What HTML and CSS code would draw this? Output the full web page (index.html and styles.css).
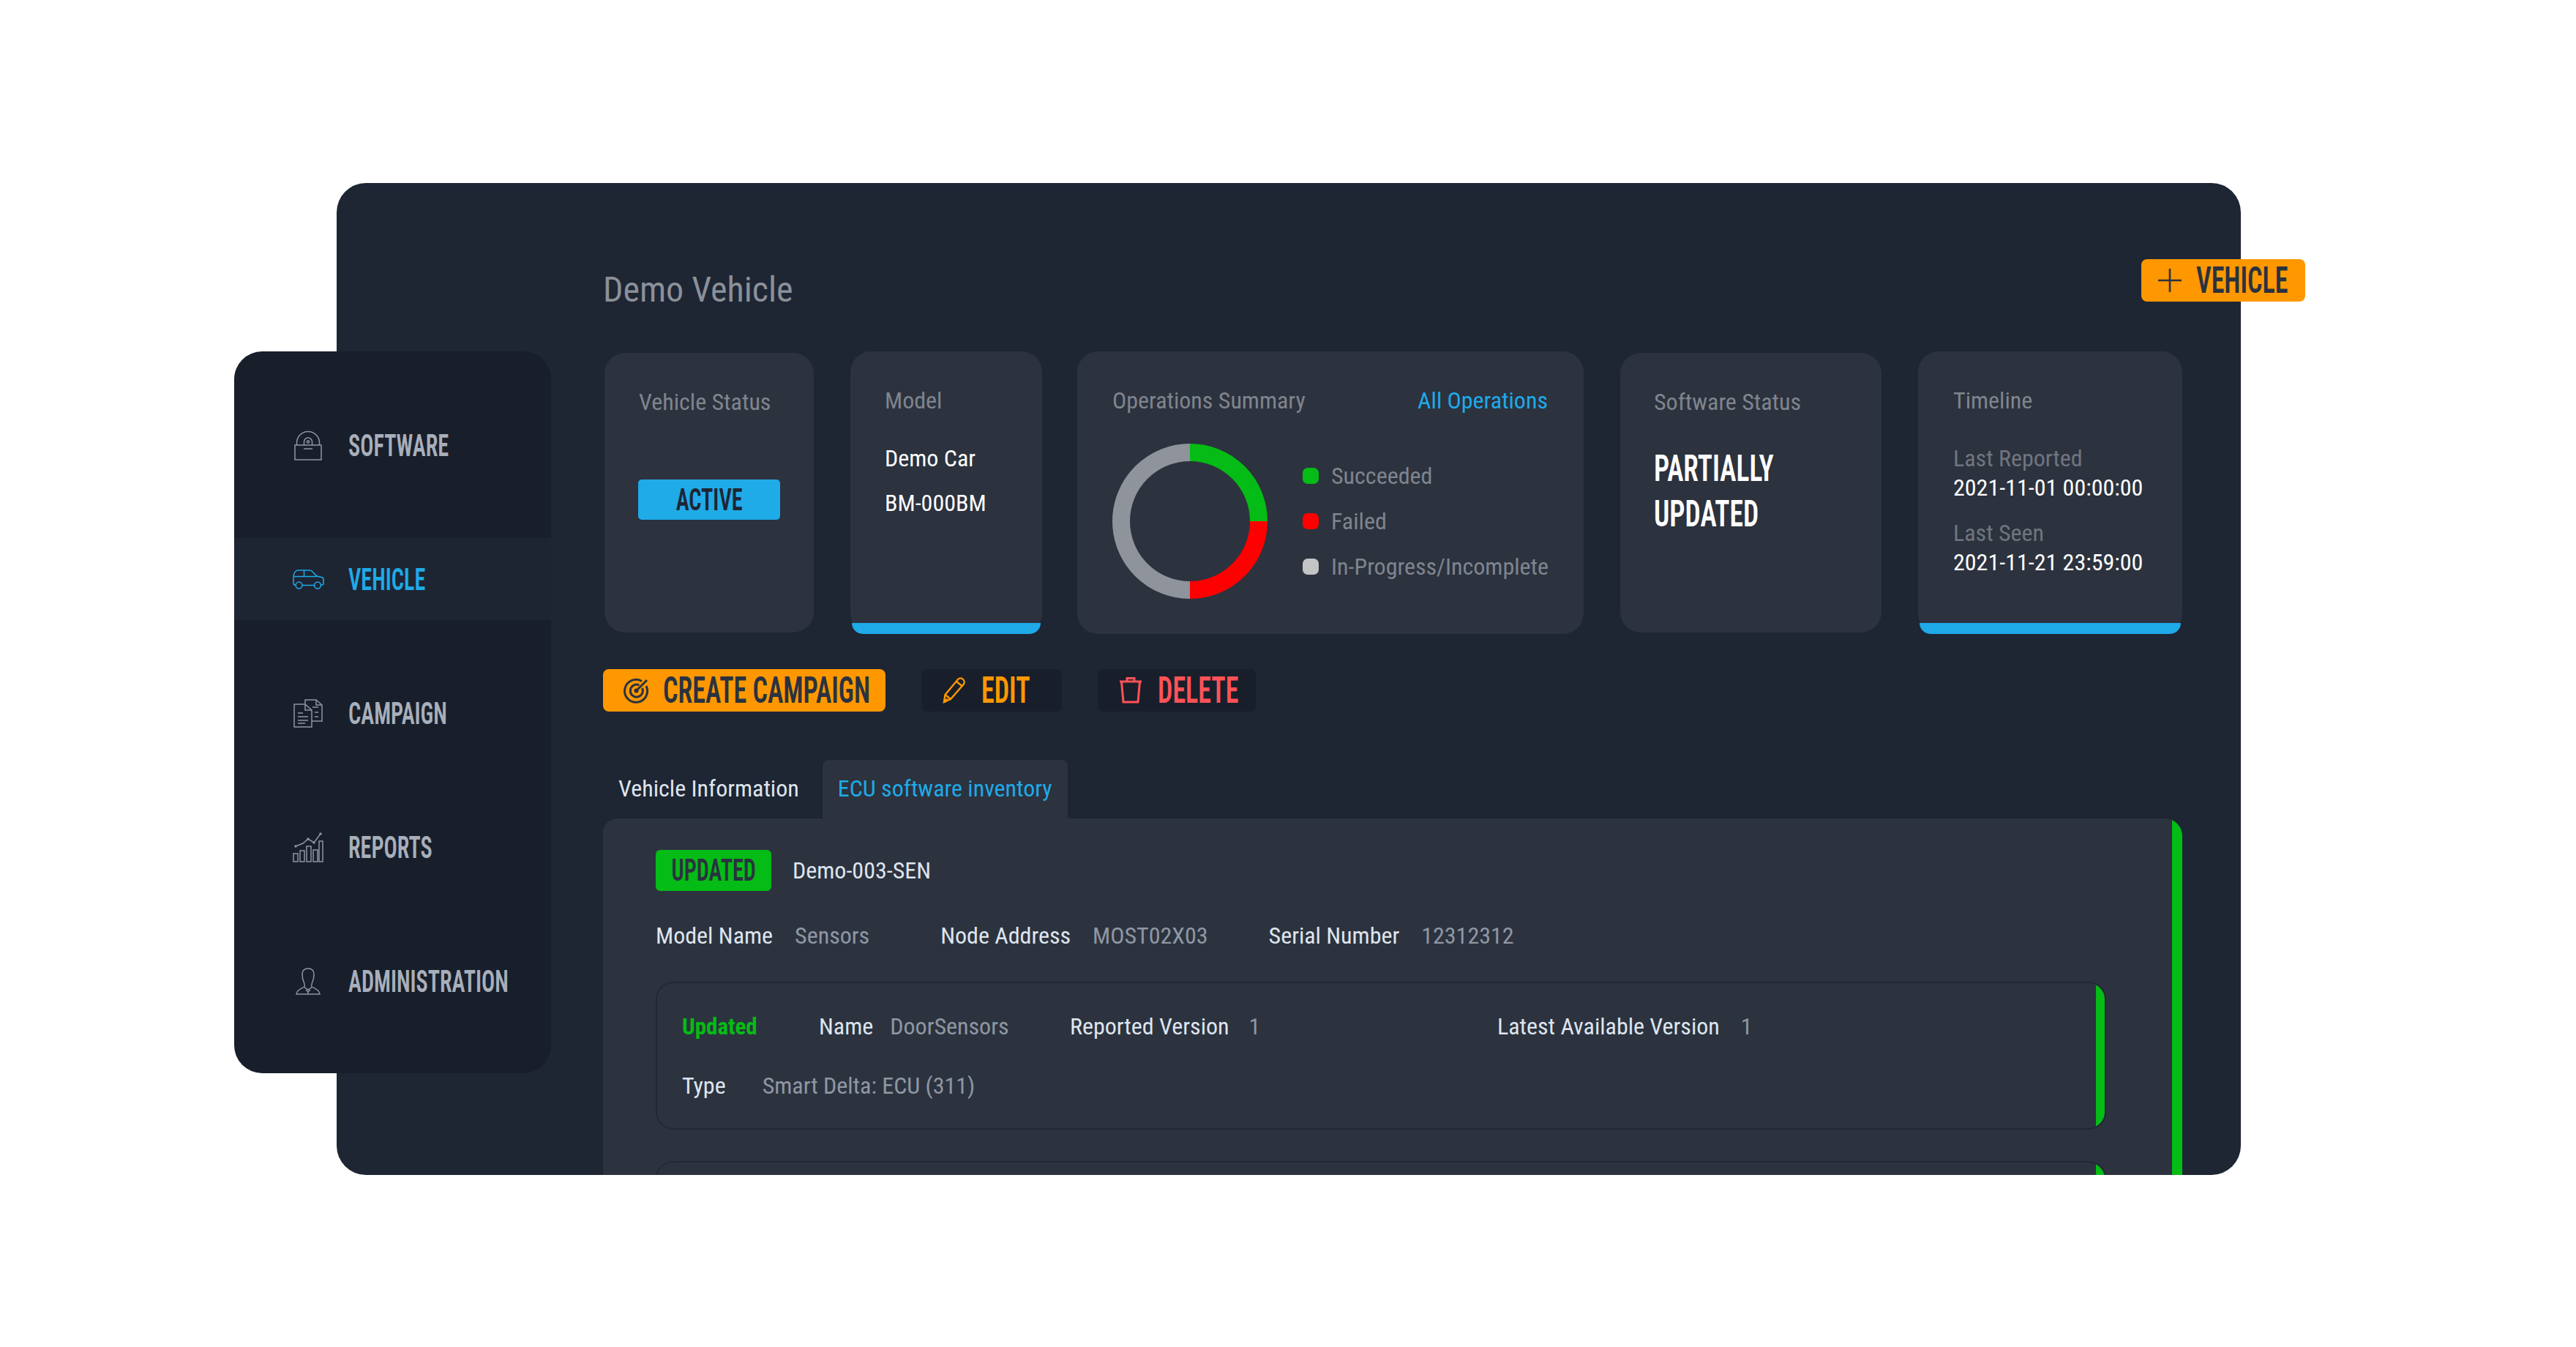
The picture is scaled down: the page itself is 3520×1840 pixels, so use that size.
FILE: index.html
```html
<!DOCTYPE html>
<html lang="en">
<head>
    <meta charset="UTF-8">
    <title>Demo Vehicle</title>
    <link rel="stylesheet" href="styles.css">
</head>
<body>
    <div class="stage">
        <main class="window">
            <h1 class="page-title">Demo Vehicle</h1>

            <section class="cards">
                <div class="card card-status">
                    <div class="card-label">Vehicle Status</div>
                    <div class="status-badge"><span class="cond">ACTIVE</span></div>
                </div>
                <div class="card card-model card-accent">
                    <div class="card-label">Model</div>
                    <div class="model-line first">Demo Car</div>
                    <div class="model-line">BM-000BM</div>
                </div>
                <div class="card card-ops">
                    <div class="ops-head">
                        <span class="card-label">Operations Summary</span>
                        <a class="ops-link">All Operations</a>
                    </div>
                    <div class="ops-body">
                        <svg class="donut" viewBox="0 0 212 212" width="212" height="212">
                            <path d="M106 12 A94 94 0 0 1 200 106" fill="none" stroke="#04bc15" stroke-width="24"/>
                            <path d="M200 106 A94 94 0 0 1 106 200" fill="none" stroke="#ff0000" stroke-width="24"/>
                            <path d="M106 200 A94 94 0 0 1 106 12" fill="none" stroke="#8f939b" stroke-width="24"/>
                        </svg>
                        <ul class="legend">
                            <li><i class="dot dot-green"></i>Succeeded</li>
                            <li><i class="dot dot-red"></i>Failed</li>
                            <li><i class="dot dot-grey"></i>In-Progress/Incomplete</li>
                        </ul>
                    </div>
                </div>
                <div class="card card-software">
                    <div class="card-label">Software Status</div>
                    <div class="software-state"><span class="cond">PARTIALLY</span><br><span class="cond">UPDATED</span></div>
                </div>
                <div class="card card-timeline card-accent">
                    <div class="card-label">Timeline</div>
                    <div class="time-label first">Last Reported</div>
                    <div class="time-value">2021-11-01 00:00:00</div>
                    <div class="time-label second">Last Seen</div>
                    <div class="time-value">2021-11-21 23:59:00</div>
                </div>
            </section>

            <section class="actions">
                <button class="btn btn-create">
                    <svg viewBox="0 0 36 36" width="36" height="36" fill="none" stroke="#2a3240" stroke-width="3">
                        <path d="M25 5.5 A15.5 15.5 0 1 0 31 12"/>
                        <path d="M21.5 11 A8.5 8.5 0 1 0 25.5 15"/>
                        <path d="M17 19 L32 4"/>
                        <circle cx="17.5" cy="18.5" r="1.6"/>
                    </svg>
                    <span class="cond">CREATE CAMPAIGN</span>
                </button>
                <button class="btn btn-edit">
                    <svg viewBox="0 0 32 36" width="32" height="36" fill="none" stroke="#ff9800" stroke-width="2.4">
                        <path d="M2 34 L3.5 24 L21 3 C23 1 26 1 28 3 C30 5 30 8 28.5 10 L11 30 Z"/>
                        <path d="M3.5 24 L11 30"/>
                        <path d="M19 6 L26.5 12"/>
                        <path d="M2 34 L7 30" stroke-width="3.4"/>
                    </svg>
                    <span class="cond">EDIT</span>
                </button>
                <button class="btn btn-delete">
                    <svg viewBox="0 0 32 36" width="32" height="36" fill="none" stroke="#ff5257" stroke-width="3">
                        <path d="M1 6 H31"/>
                        <path d="M11 5 V1.5 H21 V5"/>
                        <path d="M3.5 6 L6 34 H26 L28.5 6"/>
                    </svg>
                    <span class="cond">DELETE</span>
                </button>
            </section>

            <nav class="tabs">
                <a class="tab">Vehicle Information</a>
                <a class="tab tab-active">ECU software inventory</a>
            </nav>

            <section class="panel">
                <div class="ecu-head">
                    <span class="ecu-badge"><span class="cond">UPDATED</span></span>
                    <span class="key">Demo-003-SEN</span>
                </div>
                <div class="ecu-meta">
                    <span class="key">Model Name</span><span class="val val-model">Sensors</span>
                    <span class="key">Node Address</span><span class="val val-node">MOST02X03</span>
                    <span class="key">Serial Number</span><span class="val">12312312</span>
                </div>

                <div class="sw-item">
                    <div class="sw-row">
                        <span class="sw-state">Updated</span>
                        <span class="sw-pair sw-name"><span class="key">Name</span><span class="val">DoorSensors</span></span>
                        <span class="sw-pair"><span class="key">Reported Version</span><span class="val">1</span></span>
                        <span class="sw-pair sw-latest"><span class="key">Latest Available Version</span><span class="val">1</span></span>
                    </div>
                    <div class="sw-type">
                        <span class="key">Type</span><span class="val">Smart Delta: ECU (311)</span>
                    </div>
                </div>
                <div class="sw-item"></div>
            </section>
        </main>

        <button class="add-vehicle">
            <svg viewBox="0 0 32 32" width="32" height="32" fill="none" stroke="#2a3240" stroke-width="2.6">
                <path d="M16 0 V32 M0 16 H32"/>
            </svg>
            <span class="cond">VEHICLE</span>
        </button>

        <aside class="sidebar">
            <a class="nav-item">
                <span class="nav-icon">
                    <svg viewBox="0 0 38 41" width="38" height="41" fill="none" stroke="currentColor" stroke-width="1.5">
                        <rect x="1" y="20" width="36" height="20"/>
                        <path d="M3.5 20 V17 A15.5 15.5 0 0 1 34.5 17 V20"/>
                        <path d="M13.5 20 V15.5 A5.5 5.5 0 0 1 24.5 15.5 V20"/>
                        <circle cx="19" cy="15.5" r="1.6"/>
                        <path d="M13 25 H25"/>
                    </svg>
                </span>
                <span class="nav-text cond">SOFTWARE</span>
            </a>
            <a class="nav-item nav-active">
                <span class="nav-icon">
                    <svg viewBox="0 0 43 27" width="43" height="27" fill="none" stroke="currentColor" stroke-width="1.5">
                        <path d="M4 21 H2.5 Q1 21 1 19 V11 Q1 5 4 2.5 Q5 1 7 1 H23 Q25 1 26.5 2.5 L33 9 L39.5 10.5 Q42 11 42 13.5 V19 Q42 21 40 21 H38.5"/>
                        <path d="M13 21.5 H29.5"/>
                        <path d="M1.5 9.5 H33"/>
                        <path d="M15.5 1 V9.5"/>
                        <circle cx="8.5" cy="21.5" r="4.4"/>
                        <circle cx="34" cy="21.5" r="4.4"/>
                    </svg>
                </span>
                <span class="nav-text cond">VEHICLE</span>
            </a>
            <a class="nav-item">
                <span class="nav-icon">
                    <svg viewBox="0 0 40 39" width="40" height="39" fill="none" stroke="currentColor" stroke-width="1.5">
                        <path d="M16 7 H1 V38 H25 V15 L16 7 V15 H25"/>
                        <path d="M16 6 V1 H31 L39 8 V30 H25"/>
                        <path d="M31 1 V8 H39"/>
                        <path d="M6 19 H13 M6 24 H20 M6 29 H20 M6 33 H16"/>
                        <path d="M26 11 H34 M29 18 H34 M29 24 H34"/>
                    </svg>
                </span>
                <span class="nav-text cond">CAMPAIGN</span>
            </a>
            <a class="nav-item">
                <span class="nav-icon">
                    <svg viewBox="0 0 42 41" width="42" height="41" fill="none" stroke="currentColor" stroke-width="1.5">
                        <rect x="1" y="29" width="6" height="11"/>
                        <rect x="10" y="25" width="6" height="15"/>
                        <rect x="19" y="19" width="6" height="21"/>
                        <rect x="28" y="24" width="6" height="16"/>
                        <rect x="36" y="12" width="5" height="28"/>
                        <path d="M4 19 L14 15 L21 9 L29 14 L38 2"/>
                        <circle cx="4" cy="19" r="1" fill="currentColor"/>
                        <circle cx="21" cy="9" r="1" fill="currentColor"/>
                        <circle cx="29" cy="14" r="1" fill="currentColor"/>
                        <circle cx="38" cy="2" r="1" fill="currentColor"/>
                    </svg>
                </span>
                <span class="nav-text cond">REPORTS</span>
            </a>
            <a class="nav-item">
                <span class="nav-icon">
                    <svg viewBox="0 0 36 37" width="36" height="37" fill="none" stroke="currentColor" stroke-width="1.5">
                        <path d="M18 1 C12 1 10 4 10 9 C10 14 10 15 12 19 C13 22 14 24 13 26 C10 28 3 29 2 36 H34 C33 29 26 28 23 26 C22 24 23 22 24 19 C26 15 26 14 26 9 C26 4 24 1 18 1 Z"/>
                        <path d="M12 26 L18 30 L24 26"/>
                        <path d="M15 30 L18 33 L21 30 M18 33 V36"/>
                    </svg>
                </span>
                <span class="nav-text cond">ADMINISTRATION</span>
            </a>
        </aside>
    </div>
</body>
</html>
```
FILE: styles.css
```css
body {
    margin: 0;
    background-color: #fff;
    font-family: "Roboto", "Liberation Sans", sans-serif;
    font-stretch: 75%;
    color: #dfe5ee;
}

.stage {
    position: relative;
    width: 3520px;
    height: 1840px;
    overflow: hidden;
}

/* the headings are a narrow DIN style face, closest is squeezed Roboto */
.cond {
    display: inline-block;
    flex: none;
    white-space: nowrap;
    font-weight: 600;
    transform: scaleX(0.72);
    transform-origin: 0 50%;
}

svg {
    flex: none;
}

.window {
    position: absolute;
    left: 460px;
    top: 250px;
    box-sizing: border-box;
    width: 2602px;
    height: 1355px;
    padding: 116px 80px 0 366px;
    overflow: hidden;
    background-color: #1e2533;
    border-radius: 40px;
}

.page-title {
    margin: 0 0 54px -2px;
    font-size: 48px;
    line-height: 60px;
    font-weight: 400;
    color: #8b9098;
}

.cards {
    display: flex;
    align-items: center;
    height: 386px;
}

.card {
    position: relative;
    box-sizing: border-box;
    padding: 48px 47px 0;
    background-color: #2c323e;
    border-radius: 28px;
}

.card-accent::after {
    content: "";
    position: absolute;
    left: 2px;
    right: 2px;
    bottom: 0;
    height: 15px;
    background-color: #1faae8;
    border-radius: 0 0 26px 26px;
}

.card-label {
    font-size: 32px;
    line-height: 38px;
    color: #7f858e;
}

.card-status { width: 286px; height: 382px; margin-right: 50px; }
.card-model { width: 262px; height: 386px; margin-right: 48px; }
.card-ops { width: 692px; height: 386px; margin-right: 50px; padding: 48px 49px 0 48px; }
.card-software { width: 357px; height: 382px; margin-right: 50px; padding-left: 46px; }
.card-timeline { width: 361px; height: 386px; padding-left: 48px; }

.status-badge {
    display: flex;
    justify-content: center;
    width: 194px;
    height: 55px;
    margin: 87px 0 0 -1px;
    background-color: #1faae8;
    border-radius: 5px;
    font-size: 42px;
    line-height: 55px;
    color: #1e2533;
}

.status-badge .cond,
.ecu-badge .cond {
    transform-origin: 50% 50%;
}

.model-line {
    margin-top: 25px;
    font-size: 32px;
    line-height: 36px;
    color: #fff;
}

.model-line.first { margin-top: 42px; }

.ops-head {
    display: flex;
    justify-content: space-between;
    align-items: center;
    height: 38px;
}

.ops-link {
    font-size: 32px;
    color: #1faae8;
}

.ops-body {
    display: flex;
    align-items: center;
    margin-top: 40px;
}

.legend {
    list-style: none;
    margin: 0 0 0 48px;
    padding: 0;
    font-size: 32px;
    color: #7f858e;
}

.legend li {
    display: flex;
    align-items: center;
    height: 62px;
    white-space: nowrap;
}

.dot {
    width: 22px;
    height: 22px;
    margin-right: 17px;
    border-radius: 7px;
}

.dot-green { background-color: #04bc15; }
.dot-red { background-color: #ff0000; }
.dot-grey { background-color: #c4c4c4; }

.software-state {
    margin-top: 41px;
    font-size: 50px;
    line-height: 62px;
    color: #fff;
}

.software-state .cond {
    transform: scaleX(0.75);
}

.time-label {
    font-size: 32px;
    line-height: 36px;
    color: #70757e;
}

.time-label.first { margin-top: 42px; }
.time-label.second { margin-top: 26px; }

.time-value {
    margin-top: 4px;
    font-size: 32px;
    line-height: 36px;
    color: #fff;
}

.actions {
    display: flex;
    gap: 49px;
    margin: 48px 0 0 -2px;
}

.btn {
    display: flex;
    align-items: center;
    height: 58px;
    padding: 0;
    border: none;
    font-family: inherit;
    font-stretch: inherit;
    font-size: 50px;
    background-color: #181f2b;
    border-radius: 8px;
}

.btn-create {
    width: 386px;
    gap: 18px;
    padding-left: 28px;
    background-color: #ff9800;
    color: #2a3240;
}

.btn-edit {
    width: 192px;
    gap: 21px;
    padding-left: 29px;
    color: #ff9800;
}

.btn-delete {
    width: 216px;
    gap: 21px;
    padding-left: 29px;
    color: #ff5257;
}

.tabs {
    display: flex;
    gap: 11px;
    margin: 66px 0 0 -2px;
    height: 80px;
    font-size: 32px;
    line-height: 78px;
}

.tab {
    padding: 0 21px;
    color: #dfe5ee;
}

.tab-active {
    background-color: #2c323e;
    border-radius: 8px 8px 0 0;
    color: #1faae8;
}

.panel {
    position: relative;
    box-sizing: border-box;
    height: 560px;
    margin-left: -2px;
    padding: 43px 104px 0 72px;
    overflow: hidden;
    background-color: #2c333f;
    border-radius: 20px 24px 0 0;
}

.panel::after {
    content: "";
    position: absolute;
    top: 0;
    right: 0;
    bottom: 0;
    width: 14px;
    background-color: #04bc15;
}

.key {
    font-size: 32px;
    color: #dfe5ee;
}

.val {
    font-size: 32px;
    color: #8f97a3;
}

.ecu-head {
    display: flex;
    align-items: center;
    gap: 29px;
}

.ecu-badge {
    display: flex;
    justify-content: center;
    width: 158px;
    height: 56px;
    background-color: #04bc15;
    border-radius: 6px;
    font-size: 42px;
    line-height: 56px;
    color: #2a3240;
}

.ecu-meta {
    display: flex;
    align-items: center;
    gap: 30px;
    height: 40px;
    margin-top: 41px;
}

.val-model { margin-right: 67px; }
.val-node { margin-right: 53px; }

.sw-item {
    position: relative;
    box-sizing: border-box;
    height: 202px;
    margin-top: 43px;
    padding: 39px 34px 0;
    overflow: hidden;
    border: 2px solid #222936;
    border-radius: 24px;
}

.sw-item::after {
    content: "";
    position: absolute;
    top: 0;
    right: 0;
    bottom: 0;
    width: 12px;
    background-color: #04bc15;
}

.sw-row {
    display: grid;
    grid-template-columns: 187px 343px 584px 1fr;
    align-items: center;
    height: 40px;
}

.sw-state {
    font-size: 31px;
    font-weight: 700;
    color: #04bc15;
}

.sw-pair {
    display: flex;
    gap: 27px;
}

.sw-name { gap: 23px; }
.sw-latest { gap: 29px; }

.sw-type {
    display: flex;
    align-items: center;
    gap: 50px;
    height: 40px;
    margin-top: 41px;
}

.add-vehicle {
    position: absolute;
    left: 2926px;
    top: 354px;
    display: flex;
    align-items: center;
    gap: 20px;
    width: 224px;
    height: 58px;
    padding: 0 0 0 23px;
    border: none;
    font-family: inherit;
    font-stretch: inherit;
    font-size: 50px;
    background-color: #ff9800;
    border-radius: 8px;
    color: #2a3240;
}

.sidebar {
    position: absolute;
    left: 320px;
    top: 480px;
    box-sizing: border-box;
    width: 433px;
    height: 986px;
    padding-top: 72px;
    background-color: #181f2b;
    border-radius: 38px;
}

.nav-item {
    display: flex;
    align-items: center;
    height: 112px;
    margin-bottom: 71px;
    color: #8f95a1;
}

.nav-icon {
    display: flex;
    flex: none;
    justify-content: center;
    width: 60px;
    margin: 0 25px 0 71px;
}

.nav-text {
    font-size: 42px;
    color: #a8afbb;
}

.nav-active {
    background-color: #1e2532;
    color: #1faae8;
}

.nav-active .nav-text {
    color: #1faae8;
}
```
